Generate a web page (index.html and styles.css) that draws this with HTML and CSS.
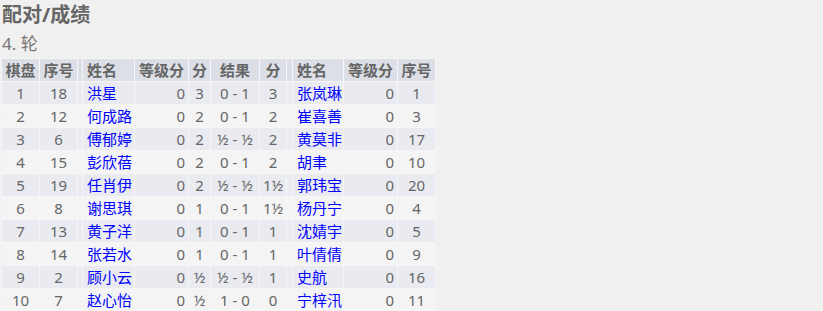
FILE: index.html
```html
<!DOCTYPE html>
<html lang="zh">
<head>
<meta charset="utf-8">
<title>配对/成绩</title>
<link rel="stylesheet" href="styles.css">
</head>
<body>
<h2 class="title">配对/成绩</h2>
<h3 class="round">4. 轮</h3>
<table class="pairs">
<thead>
<tr><th class="w-board">棋盘</th><th class="w-no">序号</th><th class="w-gap"></th><th class="l w-name">姓名</th><th class="w-rating">等级分</th><th class="w-pts">分</th><th class="w-res">结果</th><th class="w-pts2">分</th><th class="w-gap2"></th><th class="l w-name2">姓名</th><th class="w-rating">等级分</th><th class="w-no">序号</th></tr>
</thead>
<tbody>
<tr class="odd"><td>1</td><td>18</td><td></td><td class="l"><a href="#">洪星</a></td><td class="r">0</td><td>3</td><td>0 - 1</td><td>3</td><td></td><td class="l"><a href="#">张岚琳</a></td><td class="r">0</td><td>1</td></tr>
<tr class="even"><td>2</td><td>12</td><td></td><td class="l"><a href="#">何成路</a></td><td class="r">0</td><td>2</td><td>0 - 1</td><td>2</td><td></td><td class="l"><a href="#">崔喜善</a></td><td class="r">0</td><td>3</td></tr>
<tr class="odd"><td>3</td><td>6</td><td></td><td class="l"><a href="#">傅郁婷</a></td><td class="r">0</td><td>2</td><td>½ - ½</td><td>2</td><td></td><td class="l"><a href="#">黄莫非</a></td><td class="r">0</td><td>17</td></tr>
<tr class="even"><td>4</td><td>15</td><td></td><td class="l"><a href="#">彭欣蓓</a></td><td class="r">0</td><td>2</td><td>0 - 1</td><td>2</td><td></td><td class="l"><a href="#">胡聿</a></td><td class="r">0</td><td>10</td></tr>
<tr class="odd"><td>5</td><td>19</td><td></td><td class="l"><a href="#">任肖伊</a></td><td class="r">0</td><td>2</td><td>½ - ½</td><td>1½</td><td></td><td class="l"><a href="#">郭玮宝</a></td><td class="r">0</td><td>20</td></tr>
<tr class="even"><td>6</td><td>8</td><td></td><td class="l"><a href="#">谢思琪</a></td><td class="r">0</td><td>1</td><td>0 - 1</td><td>1½</td><td></td><td class="l"><a href="#">杨丹宁</a></td><td class="r">0</td><td>4</td></tr>
<tr class="odd"><td>7</td><td>13</td><td></td><td class="l"><a href="#">黄子洋</a></td><td class="r">0</td><td>1</td><td>0 - 1</td><td>1</td><td></td><td class="l"><a href="#">沈婧宇</a></td><td class="r">0</td><td>5</td></tr>
<tr class="even"><td>8</td><td>14</td><td></td><td class="l"><a href="#">张若水</a></td><td class="r">0</td><td>1</td><td>0 - 1</td><td>1</td><td></td><td class="l"><a href="#">叶倩倩</a></td><td class="r">0</td><td>9</td></tr>
<tr class="odd"><td>9</td><td>2</td><td></td><td class="l"><a href="#">顾小云</a></td><td class="r">0</td><td>½</td><td>½ - ½</td><td>1</td><td></td><td class="l"><a href="#">史航</a></td><td class="r">0</td><td>16</td></tr>
<tr class="even"><td>10</td><td>7</td><td></td><td class="l"><a href="#">赵心怡</a></td><td class="r">0</td><td>½</td><td>1 - 0</td><td>0</td><td></td><td class="l"><a href="#">宁梓汛</a></td><td class="r">0</td><td>11</td></tr>
</tbody>
</table>
</body>
</html>
```
FILE: styles.css
```css
html, body {
  margin: 0;
  padding: 0;
  background: #f0f0f0;
}
body {
  padding: 0 1px;
  font-family: "Noto Sans", "Noto Sans CJK SC", sans-serif;
  color: #666;
}
.title {
  margin: 0;
  padding: 3px 0 0 1px;
  font-size: 20px;
  line-height: 24px;
  font-weight: bold;
  color: #666;
}
.round {
  margin: 0;
  padding: 5px 0 0 1px;
  font-size: 17px;
  line-height: 24px;
  font-weight: normal;
  color: #777;
}
.pairs {
  width: 435px;
  margin-top: 2px;
  border-collapse: separate;
  border-spacing: 1px;
  background: #f6f6f6;
  table-layout: fixed;
  font-size: 15px;
}
.pairs th, .pairs td {
  box-sizing: border-box;
  padding: 0 2px;
  height: 22px;
  line-height: 22px;
  text-align: center;
  white-space: nowrap;
  overflow: hidden;
}
.pairs .w-gap, .pairs .w-gap2 { padding: 0; }
.w-board, .w-no { width: 37px; }
.w-gap { width: 4px; }
.w-name { width: 51px; }
.w-rating { width: 53px; }
.w-pts { width: 21px; }
.w-res { width: 48px; }
.w-pts2 { width: 26px; }
.w-gap2 { width: 5px; }
.w-name2 { width: 50px; }
.pairs th {
  background: #dcdfe5;
  font-weight: bold;
  color: #666;
}
.pairs .odd td { background: #e9ebf0; }
.pairs .even td { background: #f4f4f4; }
.pairs .l { text-align: left; padding-left: 4px; }
.pairs .r { text-align: right; padding-right: 3px; }
.pairs a {
  color: #0000ff;
  text-decoration: none;
}
```
